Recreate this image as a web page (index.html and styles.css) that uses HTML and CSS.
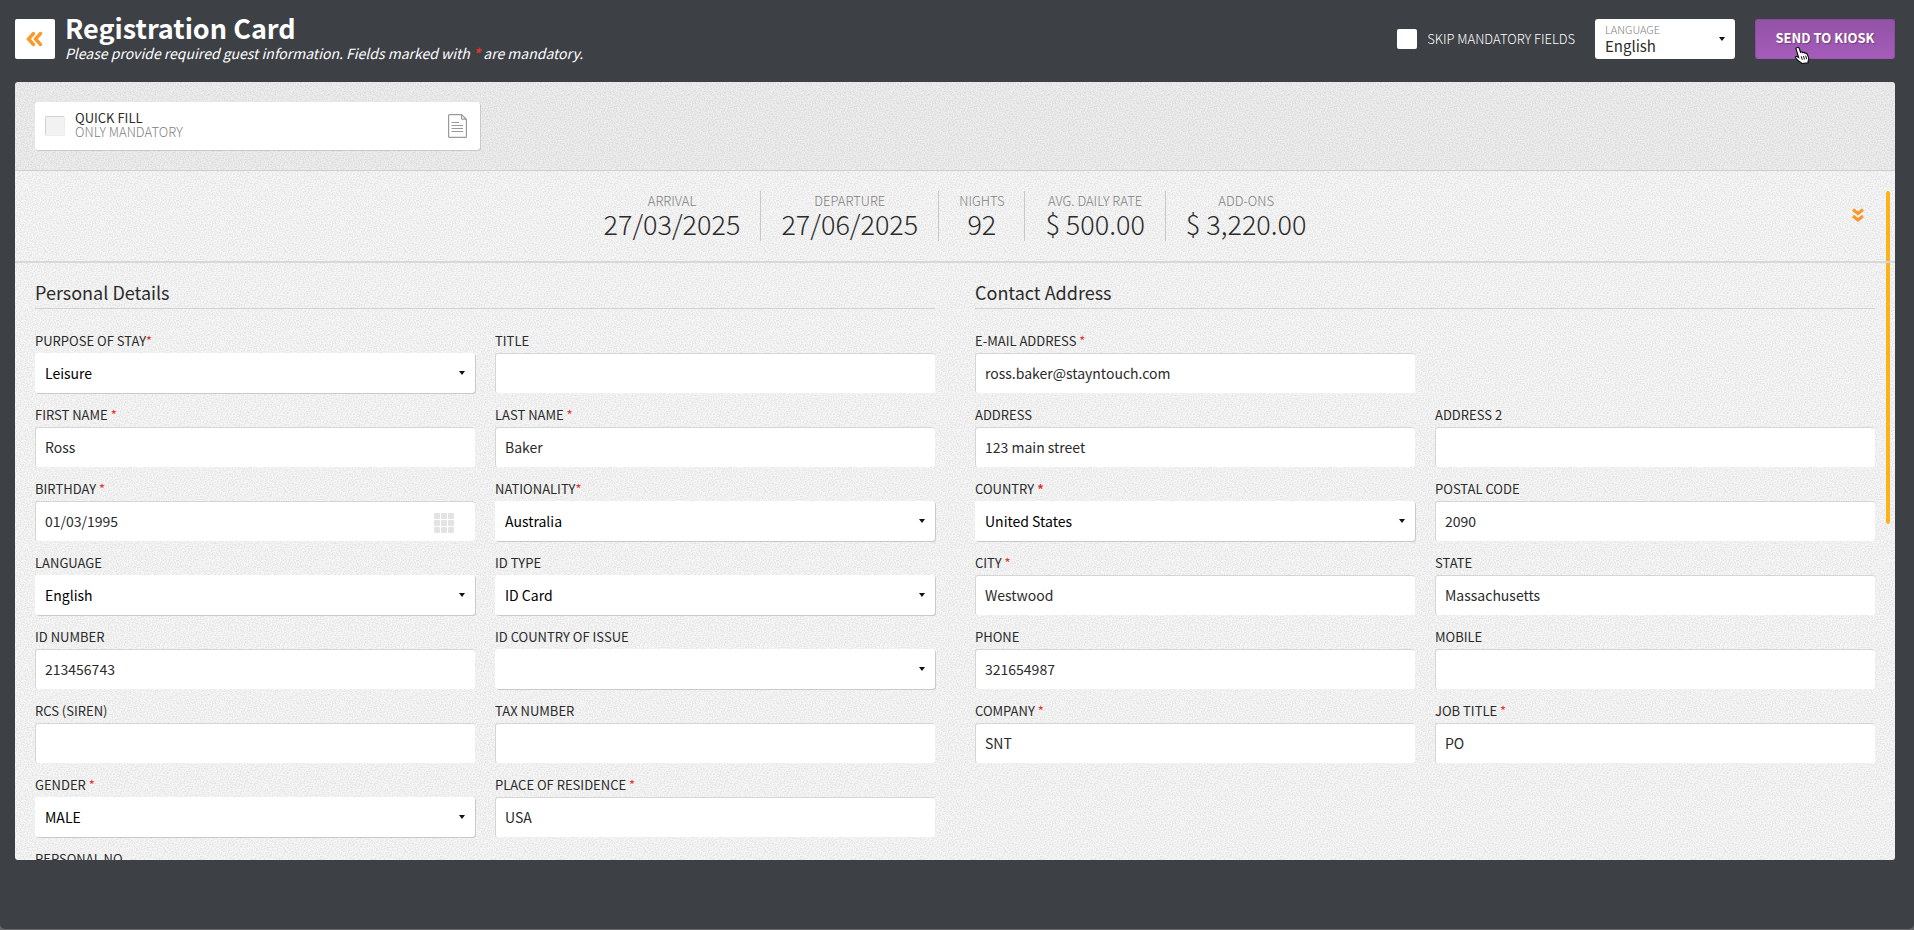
FILE: index.html
```html
<!DOCTYPE html>
<html lang="en">
<head>
<meta charset="utf-8">
<title>Registration Card</title>
<link rel="stylesheet" href="styles.css">
</head>
<body>
<div class="app">
  <header class="topbar">
    <button class="back" type="button" aria-label="Back">
      <svg width="18" height="16" viewBox="0 0 18 16" fill="none" stroke="#f79a2b" stroke-width="3.400" stroke-linecap="round"><path d="M7.500 2.500 2.500 8 7.500 13.500M14.500 2.500 9.500 8 14.500 13.500"/></svg>
    </button>
    <div class="heading">
      <h1>Registration Card</h1>
      <p>Please provide required guest information. Fields marked with <strong class="req">*</strong> are mandatory.</p>
    </div>
    <label class="skip"><input type="checkbox" class="tick"> SKIP MANDATORY FIELDS</label>
    <div class="locale">
      <label for="locale">LANGUAGE</label>
      <select id="locale"><option>English</option></select>
    </div>
    <div class="send-wrap">
      <button class="send" type="button">SEND TO KIOSK</button>
      <svg class="cursor" width="17" height="18" viewBox="0 0 17 18"><path d="M3 1.500c1.200-.6 2 .1 2.300 1l1.300 3.800c1-.5 1.800-.3 2.200.4 1-.5 1.800-.2 2.200.5 1-.3 1.700 0 2.100.8l1.500 3.600c.5 1.500-.1 2.700-.6 4l.2 1.200-6.600.9-.6-1.200c-2-.8-4-2.700-5.300-4.500-.7-1 .3-2 1.400-1.400l1.500.9L2.100 3.200c-.3-.8.1-1.400.9-1.700z" fill="#fff" stroke="#111" stroke-width="1.200"/><path d="M7.300 10.300l1 3.500M9.500 10l1 3.500M11.700 9.700l1 3.500" stroke="#111" fill="none"/></svg>
    </div>
  </header>

  <main class="card">
    <div class="toolbar">
      <label class="quick">
        <input type="checkbox" class="tick tick-grey">
        <span class="quick-text"><span>QUICK FILL</span><span class="muted">ONLY MANDATORY</span></span>
        <svg width="19" height="24" viewBox="0 0 19 24" fill="none" stroke="#9a9a9a" stroke-width="1.200"><path d="M1.500.6H13.500L18.400 5.200V22.500a.9.9 0 0 1-.9.9H1.500a.9.9 0 0 1-.9-.9V1.500a.9.9 0 0 1 .9-.9zM13.500.6V4.300a.9.9 0 0 0 .9.9H18.400M3.500 8.500H11M3.500 11.500H15M3.500 14.500H15M3.500 17.500H15"/></svg>
      </label>
    </div>

    <div class="scroll">
      <div class="scroll-thumb"></div>
      <section class="summary">
        <dl class="stats">
          <div><dt>ARRIVAL</dt><dd>27/03/2025</dd></div>
          <div><dt>DEPARTURE</dt><dd>27/06/2025</dd></div>
          <div><dt>NIGHTS</dt><dd>92</dd></div>
          <div><dt>AVG. DAILY RATE</dt><dd>$ 500.00</dd></div>
          <div><dt>ADD-ONS</dt><dd>$ 3,220.00</dd></div>
        </dl>
        <button class="expand" type="button" aria-label="Show more">
          <svg width="12" height="15" viewBox="0 0 12 15" fill="none" stroke="#f79a2b" stroke-width="3"><path d="M1 1.500 6 5.500 11 1.500M1 8 6 12 11 8"/></svg>
        </button>
      </section>

      <form class="form">
        <fieldset>
          <h2>Personal Details</h2>
          <div class="fields">
            <div class="field"><label for="purpose">PURPOSE OF STAY<span class="req">*</span></label><div class="pick"><select id="purpose"><option>Leisure</option></select></div></div>
            <div class="field"><label for="title">TITLE</label><input id="title" type="text"></div>
            <div class="field"><label for="first">FIRST NAME <span class="req">*</span></label><input id="first" type="text" value="Ross"></div>
            <div class="field"><label for="last">LAST NAME <span class="req">*</span></label><input id="last" type="text" value="Baker"></div>
            <div class="field"><label for="birthday">BIRTHDAY <span class="req">*</span></label>
              <div class="date"><input id="birthday" type="text" value="01/03/1995">
                <svg width="20" height="20" viewBox="0 0 20 20" fill="#e3e3e3"><rect width="6" height="6" rx="1"/><rect x="7" width="6" height="6" rx="1"/><rect x="14" width="6" height="6" rx="1"/><rect y="7" width="6" height="6" rx="1"/><rect x="7" y="7" width="6" height="6" rx="1"/><rect x="14" y="7" width="6" height="6" rx="1"/><rect y="14" width="6" height="6" rx="1"/><rect x="7" y="14" width="6" height="6" rx="1"/><rect x="14" y="14" width="6" height="6" rx="1"/></svg>
              </div></div>
            <div class="field"><label for="nationality">NATIONALITY<span class="req">*</span></label><div class="pick"><select id="nationality"><option>Australia</option></select></div></div>
            <div class="field"><label for="language">LANGUAGE</label><div class="pick"><select id="language"><option>English</option></select></div></div>
            <div class="field"><label for="idtype">ID TYPE</label><div class="pick"><select id="idtype"><option>ID Card</option></select></div></div>
            <div class="field"><label for="idnumber">ID NUMBER</label><input id="idnumber" type="text" value="213456743"></div>
            <div class="field"><label for="idcountry">ID COUNTRY OF ISSUE</label><div class="pick"><select id="idcountry"><option></option></select></div></div>
            <div class="field"><label for="rcs">RCS (SIREN)</label><input id="rcs" type="text"></div>
            <div class="field"><label for="tax">TAX NUMBER</label><input id="tax" type="text"></div>
            <div class="field"><label for="gender">GENDER <span class="req">*</span></label><div class="pick"><select id="gender"><option>MALE</option></select></div></div>
            <div class="field"><label for="residence">PLACE OF RESIDENCE <span class="req">*</span></label><input id="residence" type="text" value="USA"></div>
            <div class="field"><label for="personal">PERSONAL NO</label><input id="personal" type="text"></div>
          </div>
        </fieldset>
        <fieldset>
          <h2>Contact Address</h2>
          <div class="fields">
            <div class="field"><label for="email">E-MAIL ADDRESS <span class="req">*</span></label><input id="email" type="text" value="ross.baker@stayntouch.com"></div>
            <div class="field row-start"><label for="address">ADDRESS</label><input id="address" type="text" value="123 main street"></div>
            <div class="field"><label for="address2">ADDRESS 2</label><input id="address2" type="text"></div>
            <div class="field"><label for="country">COUNTRY <strong class="req">*</strong></label><div class="pick"><select id="country"><option>United States</option></select></div></div>
            <div class="field"><label for="postal">POSTAL CODE</label><input id="postal" type="text" value="2090"></div>
            <div class="field"><label for="city">CITY <span class="req">*</span></label><input id="city" type="text" value="Westwood"></div>
            <div class="field"><label for="state">STATE</label><input id="state" type="text" value="Massachusetts"></div>
            <div class="field"><label for="phone">PHONE</label><input id="phone" type="text" value="321654987"></div>
            <div class="field"><label for="mobile">MOBILE</label><input id="mobile" type="text"></div>
            <div class="field"><label for="company">COMPANY <span class="req">*</span></label><input id="company" type="text" value="SNT"></div>
            <div class="field"><label for="job">JOB TITLE <span class="req">*</span></label><input id="job" type="text" value="PO"></div>
          </div>
        </fieldset>
      </form>
    </div>
  </main>
</div>
</body>
</html>
```
FILE: styles.css
```css
* { box-sizing: border-box; }

body {
  margin: 0;
  background: #66676a;
  color: #2b2b2b;
  font: 14px/18px "Noto Sans CJK SC", "Noto Sans", sans-serif;
}

h1, h2, p, dl, dd { margin: 0; }
input, select, button { font: inherit; margin: 0; }

.app {
  display: flex;
  flex-direction: column;
  height: calc(100vh - 1px);
  padding: 0 19px 69px 15px;
  background: #3d4045;
  border-radius: 0 0 5px 5px;
}

.req { color: #e2342b; }
.muted { color: #808080; font-weight: 300; }

/* Top bar */
.topbar {
  display: flex;
  align-items: center;
  flex: none;
  height: 82px;
  padding-bottom: 4px;
  color: #fff;
}

.back {
  display: grid;
  place-items: center;
  width: 40px;
  height: 40px;
  padding: 0;
  border: 0;
  border-radius: 2px;
  background: #fff;
}

.heading { flex: 1; padding-left: 10px; }
.heading h1 { font-size: 27px; line-height: 28px; font-weight: 700; }
.heading p { font-size: 14px; line-height: 22px; font-style: italic; }

.tick {
  appearance: none;
  width: 20px;
  height: 20px;
  border-radius: 2px;
  background: #fff;
}

.tick-grey {
  background: #f2f2f2;
  border: 1px solid #ececec;
  border-top-color: #d2d2d2;
  border-left-color: #d2d2d2;
}

.skip { display: flex; align-items: center; gap: 10px; font-size: 13px; font-weight: 300; }

.locale { position: relative; width: 140px; margin: 0 20px; }
.locale label {
  position: absolute;
  top: 1px;
  left: 10px;
  color: #808080;
  font-size: 11px;
  font-weight: 300;
}

select {
  appearance: none;
  display: block;
  width: 100%;
  height: 40px;
  padding: 0 10px;
  border: 0;
  border-radius: 3px;
  background: #fff;
  color: #000;
  font-size: 14px;
  line-height: 24px;
}

.locale select { padding-top: 14px; font-size: 15px; color: #2b2b2b; }

.locale::after,
.pick::after {
  content: "";
  position: absolute;
  top: 18px;
  right: 10px;
  border: 3px solid transparent;
  border-top: 4px solid #111;
  border-bottom: 0;
  pointer-events: none;
}

.send-wrap { position: relative; }
.send {
  width: 140px;
  height: 40px;
  padding: 0 0 2px;
  border: 1px solid #8a4c9c;
  border-bottom-color: #9d57b2;
  border-radius: 3px;
  background: linear-gradient(#9253a5, #a55cba);
  color: #fff;
  font-size: 13px;
  font-weight: 700;
  text-shadow: 1px 1px 1px rgba(0, 0, 0, 0.3);
}
.cursor { position: absolute; left: 39px; top: 27px; }

/* Card */
.card {
  flex: 1;
  min-height: 0;
  display: flex;
  flex-direction: column;
  overflow: hidden;
  border-radius: 3px;
  background-color: #f7f7f7;
  background-image: url("data:image/svg+xml,%3Csvg xmlns='http://www.w3.org/2000/svg' width='120' height='120'%3E%3Cfilter id='n'%3E%3CfeTurbulence type='fractalNoise' baseFrequency='0.75' numOctaves='2' stitchTiles='stitch'/%3E%3CfeColorMatrix values='0 0 0 0 0 0 0 0 0 0 0 0 0 0 0 1.6 0 0 0 -0.6'/%3E%3C/filter%3E%3Crect width='120' height='120' filter='url(%23n)' opacity='0.13'/%3E%3C/svg%3E");
}

.toolbar {
  flex: none;
  padding: 20px;
  border-bottom: 1px solid #cfcfcf;
  background: rgba(0, 0, 0, 0.035);
}

.quick {
  display: flex;
  align-items: center;
  width: 445px;
  height: 48px;
  padding: 0 13px 0 10px;
  border-radius: 3px;
  background: #fff;
  box-shadow: 1px 1px 0 #c9c9c9;
}
.quick-text {
  display: flex;
  flex-direction: column;
  flex: 1;
  padding: 0 0 2px 10px;
  font-size: 13px;
  line-height: 14px;
}

.scroll { position: relative; flex: 1; min-height: 0; overflow: hidden; }
.scroll-thumb {
  position: absolute;
  top: 20px;
  right: 5px;
  width: 4px;
  height: 333px;
  border-radius: 2px;
  background: #fdb21c;
}

.summary {
  display: flex;
  align-items: center;
  justify-content: center;
  position: relative;
  padding: 20px 0;
  border-bottom: 2px solid #d8d8d8;
}
.stats { display: flex; }
.stats div {
  height: 50px;
  padding: 0 20px;
  border-right: 1px solid #c8c8c8;
  text-align: center;
}
.stats div:last-child { border-right: 0; }
.stats dt { color: #808080; font-size: 13px; line-height: 19px; font-weight: 300; }
.stats dd { font-size: 27px; line-height: 28px; font-weight: 300; }

.expand {
  position: absolute;
  right: 31px;
  top: 37px;
  display: flex;
  padding: 0;
  border: 0;
  background: none;
}

/* Form */
.form { display: grid; grid-template-columns: 1fr 1fr; gap: 40px; padding: 16px 20px; }
fieldset { min-width: 0; margin: 0; padding: 0; border: 0; }

h2 {
  padding-bottom: 2px;
  border-bottom: 1px solid #d2d2d2;
  font-size: 18px;
  line-height: 27px;
  font-weight: 400;
}

.fields {
  display: grid;
  grid-template-columns: 1fr 1fr;
  gap: 12px 20px;
  padding-top: 22px;
}
.row-start { grid-column-start: 1; }

.field > label { display: block; padding: 1px 0 3px; font-size: 13px; }

.field input {
  display: block;
  width: 100%;
  height: 40px;
  padding: 0 9px 2px;
  border: 0;
  border-top: 1px solid #d6d6d6;
  border-left: 1px solid #d6d6d6;
  border-radius: 3px;
  background: #fff;
  color: #2b2b2b;
  font-size: 14px;
}

.pick, .date { position: relative; }
.pick select { box-shadow: 1px 1px 0 #cacaca; }
.date svg { position: absolute; right: 21px; top: 12px; }
```
